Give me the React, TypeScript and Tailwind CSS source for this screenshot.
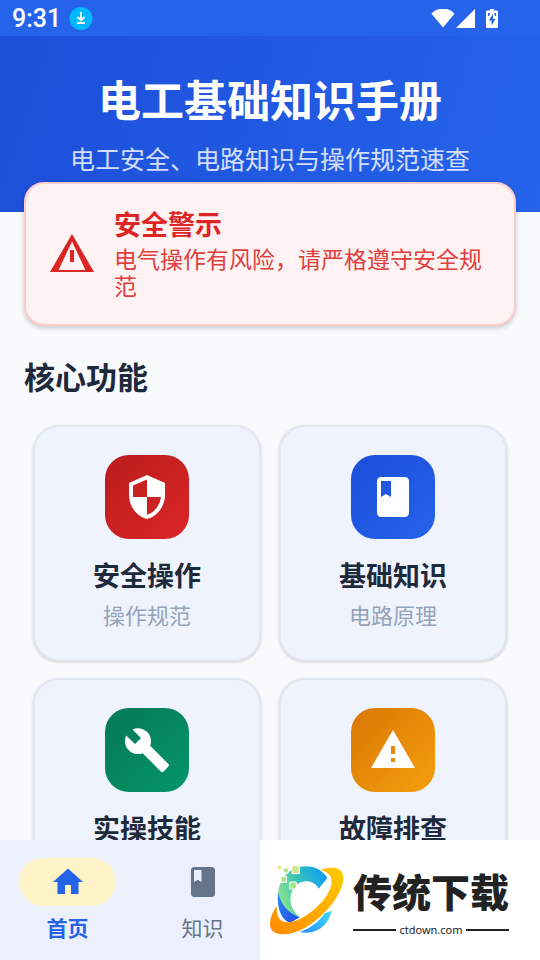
import type { IconType } from 'react-icons';
import { MdBuild, MdClass, MdHome, MdSecurity, MdWarning } from 'react-icons/md';

interface Feature {
  title: string;
  subtitle: string;
  icon: IconType;
  tile: string;
}

const features: Feature[] = [
  { title: '安全操作', subtitle: '操作规范', icon: MdSecurity, tile: 'from-[#b91c1c] to-[#dc2626]' },
  { title: '基础知识', subtitle: '电路原理', icon: MdClass, tile: 'from-[#1d4ed8] to-[#2563eb]' },
  { title: '实操技能', subtitle: '工具使用', icon: MdBuild, tile: 'from-[#047857] to-[#059669]' },
  { title: '故障排查', subtitle: '诊断维修', icon: MdWarning, tile: 'from-[#d97706] to-[#f59e0b]' },
];

function StatusBar() {
  return (
    <div className="flex h-9 shrink-0 items-center bg-[#2563eb] pt-0.5 pl-3 pr-[42px] text-white">
      <span className="font-['Roboto'] text-[25px] font-medium">9:31</span>
      <svg className="ml-2 h-6 w-6" viewBox="0 0 24 24">
        <circle cx="12" cy="11.500" r="11.500" fill="#00b8ff" />
        <path d="M12 5v8.500M8.500 10l3.500 3.500L15.500 10M8 16h8" fill="none" stroke="#fff" strokeWidth="1.8" />
      </svg>
      <div className="ml-auto flex items-center">
        <svg className="h-5 w-6" viewBox="0 0 24 20" fill="#fff">
          <path d="M12 18.500.5 4.700C3.500 1.500 7.500-.5 12-.5s8.500 2 11.500 5.200z" />
        </svg>
        <svg className="h-5 w-5" viewBox="0 0 20 20" fill="#fff">
          <path d="M20 0v19H1z" />
        </svg>
        <svg className="ml-[11px] h-5 w-3" viewBox="0 0 12 20">
          <path d="M4 0h4v1.500h3q1 0 1 1V18q0 1-1 1H1q-1 0-1-1V2.500q0-1 1-1h3z" fill="#fff" />
          <path d="M7 5 2.800 11.500h2.700V16.500L9.500 10H7zM2 4h2v1L3 7H2zM8 4h2v3H9z" fill="#2563eb" />
        </svg>
      </div>
    </div>
  );
}

function AlertIcon() {
  return (
    <svg className="h-12 w-12 shrink-0" viewBox="0 0 24 24" fill="#dc2626">
      <path fillRule="evenodd" d="M12 2 1 21h22zM12 5.700 18.700 20H5.300z" />
      <path d="M11 10h2v6h-2z" />
    </svg>
  );
}

function FeatureCard({ title, subtitle, icon: Icon, tile }: Feature) {
  return (
    <button
      type="button"
      className="flex flex-col items-center rounded-[26px] border-2 border-[#e2e8f0] bg-[#eff3fe] pt-7 pb-[30px] shadow-[0_1px_3px_rgba(0,0,0,0.2)]"
    >
      <span className={`flex h-21 w-21 items-center justify-center rounded-3xl bg-linear-135 ${tile}`}>
        <Icon className="h-12 w-12 text-white" />
      </span>
      <span className="mt-[19px] text-[27px] leading-[34px] font-bold text-[#1e293b]">{title}</span>
      <span className="mt-[7px] text-[22px] leading-[30px] text-[#94a3b8]">{subtitle}</span>
    </button>
  );
}

function SiteLogo() {
  return (
    <svg className="h-20 w-[82px] shrink-0" viewBox="0 0 246 240">
      <defs>
        <linearGradient id="ring" x1="1" y1="0" x2="0" y2="1">
          <stop offset="0" stopColor="#ffcc00" />
          <stop offset="1" stopColor="#ff8a00" />
        </linearGradient>
        <linearGradient id="arc" x1="0" y1="0.700" x2="1" y2="0.200">
          <stop offset="0" stopColor="#9bea86" />
          <stop offset="0.500" stopColor="#35c3b8" />
          <stop offset="1" stopColor="#129cf3" />
        </linearGradient>
        <linearGradient id="deep" x1="0" y1="0" x2="1" y2="1">
          <stop offset="0" stopColor="#2b8df5" />
          <stop offset="1" stopColor="#2148e8" />
        </linearGradient>
        <linearGradient id="tail" x1="0" y1="1" x2="1" y2="0">
          <stop offset="0" stopColor="#2c8cff" />
          <stop offset="1" stopColor="#3fe0f8" />
        </linearGradient>
      </defs>
      <path d="M84 26C126 10 164 22 184 54L158 86C146 62 112 56 90 76C64 102 70 146 101 172L72 188C44 164 32 130 37 92C42 62 58 38 84 26Z" fill="url(#arc)" />
      <path d="M36 96C44 132 66 160 101 172L72 188C44 180 32 138 36 96Z" fill="url(#deep)" />
      <path d="M102 216C136 204 160 184 176 160L197 152C188 196 150 226 102 216Z" fill="url(#tail)" />
      <path
        d="M163 31C196 16 228 20 232 50C234 98 178 168 116 204C76 226 32 230 17 210C6 192 14 162 33 138C30 166 38 187 66 187C104 184 156 146 184 104C204 72 204 38 163 31Z"
        fill="url(#ring)"
      />
      <g stroke="#fff" strokeWidth="3">
        <path d="M78 17h22v24H78z" fill="#cfe68c" />
        <path d="M52 24h15v15H52z" fill="#b0e490" />
        <path d="M34 16h13v13H34z" fill="#e0f08c" />
        <path d="M45 49h17v18H45z" fill="#b0e688" />
        <path d="M71 66h20v21H71z" fill="#a6e488" />
      </g>
    </svg>
  );
}

export default function App() {
  return (
    <div className="flex h-screen flex-col overflow-hidden bg-[#f9fafc] font-['Noto_Sans_CJK_SC',sans-serif]">
      <StatusBar />

      <main className="min-h-0 flex-1 overflow-y-auto [scrollbar-width:none]">
        <header className="bg-[linear-gradient(108deg,#1d4ed8,#2563eb)] pt-[34px] pb-[38px] text-center">
          <h1 className="text-[43px] leading-[56px] font-bold text-white">电工基础知识手册</h1>
          <p className="mt-4 text-[25px] leading-8 text-white/80">电工安全、电路知识与操作规范速查</p>
        </header>

        <section className="relative mx-6 -mt-[30px] flex items-center gap-[18px] rounded-[20px] border-2 border-[#fecaca] bg-[#fef2f2] px-[22px] py-[23px] shadow-[0_2px_5px_rgba(0,0,0,0.2)]">
          <AlertIcon />
          <div className="pb-0.5">
            <h2 className="text-[27px] leading-[34px] font-bold text-[#dc2626]">安全警示</h2>
            <p className="mt-1 text-[23px] leading-[27px] text-[#dc2626]/90">电气操作有风险，请严格遵守安全规范</p>
          </div>
        </section>

        <h2 className="mx-6 mt-[30px] text-[31px] leading-10 font-bold text-[#1e293b]">核心功能</h2>
        <div className="mx-[33px] mt-[29px] grid grid-cols-2 gap-x-[18px] gap-y-[17px]">
          {features.map((feature) => (
            <FeatureCard key={feature.title} {...feature} />
          ))}
        </div>
      </main>

      <footer className="relative shrink-0 bg-[#ecf0fd]">
        <nav className="grid h-30 grid-cols-4">
          <button type="button" aria-current="page" className="flex flex-col items-center pt-[18px] text-[#2563eb]">
            <span className="flex h-12 w-[97px] items-center justify-center rounded-full bg-[#fef3c7]">
              <MdHome className="h-9 w-9" />
            </span>
            <span className="mt-[7px] text-[21px] leading-7 font-bold">首页</span>
          </button>
          <button type="button" className="flex flex-col items-center pt-[18px] text-[#64748b]">
            <span className="flex h-12 w-[97px] items-center justify-center">
              <MdClass className="h-9 w-9" />
            </span>
            <span className="mt-[7px] text-[21px] leading-7">知识</span>
          </button>
        </nav>

        <div className="absolute inset-y-0 right-0 flex w-[280px] items-center gap-[5px] bg-white pl-1.5 text-[#222]">
          <SiteLogo />
          <div className="w-[156px] pt-1">
            <p className="text-[39px] leading-[48px] font-black whitespace-nowrap">传统下载</p>
            <div className="mt-2 flex items-center gap-[3px]">
              <span className="h-[2px] flex-1 bg-[#222]" />
              <span className="font-['Noto_Sans'] text-[11px] leading-4">ctdown.com</span>
              <span className="h-[2px] flex-1 bg-[#222]" />
            </div>
          </div>
        </div>
      </footer>
    </div>
  );
}
